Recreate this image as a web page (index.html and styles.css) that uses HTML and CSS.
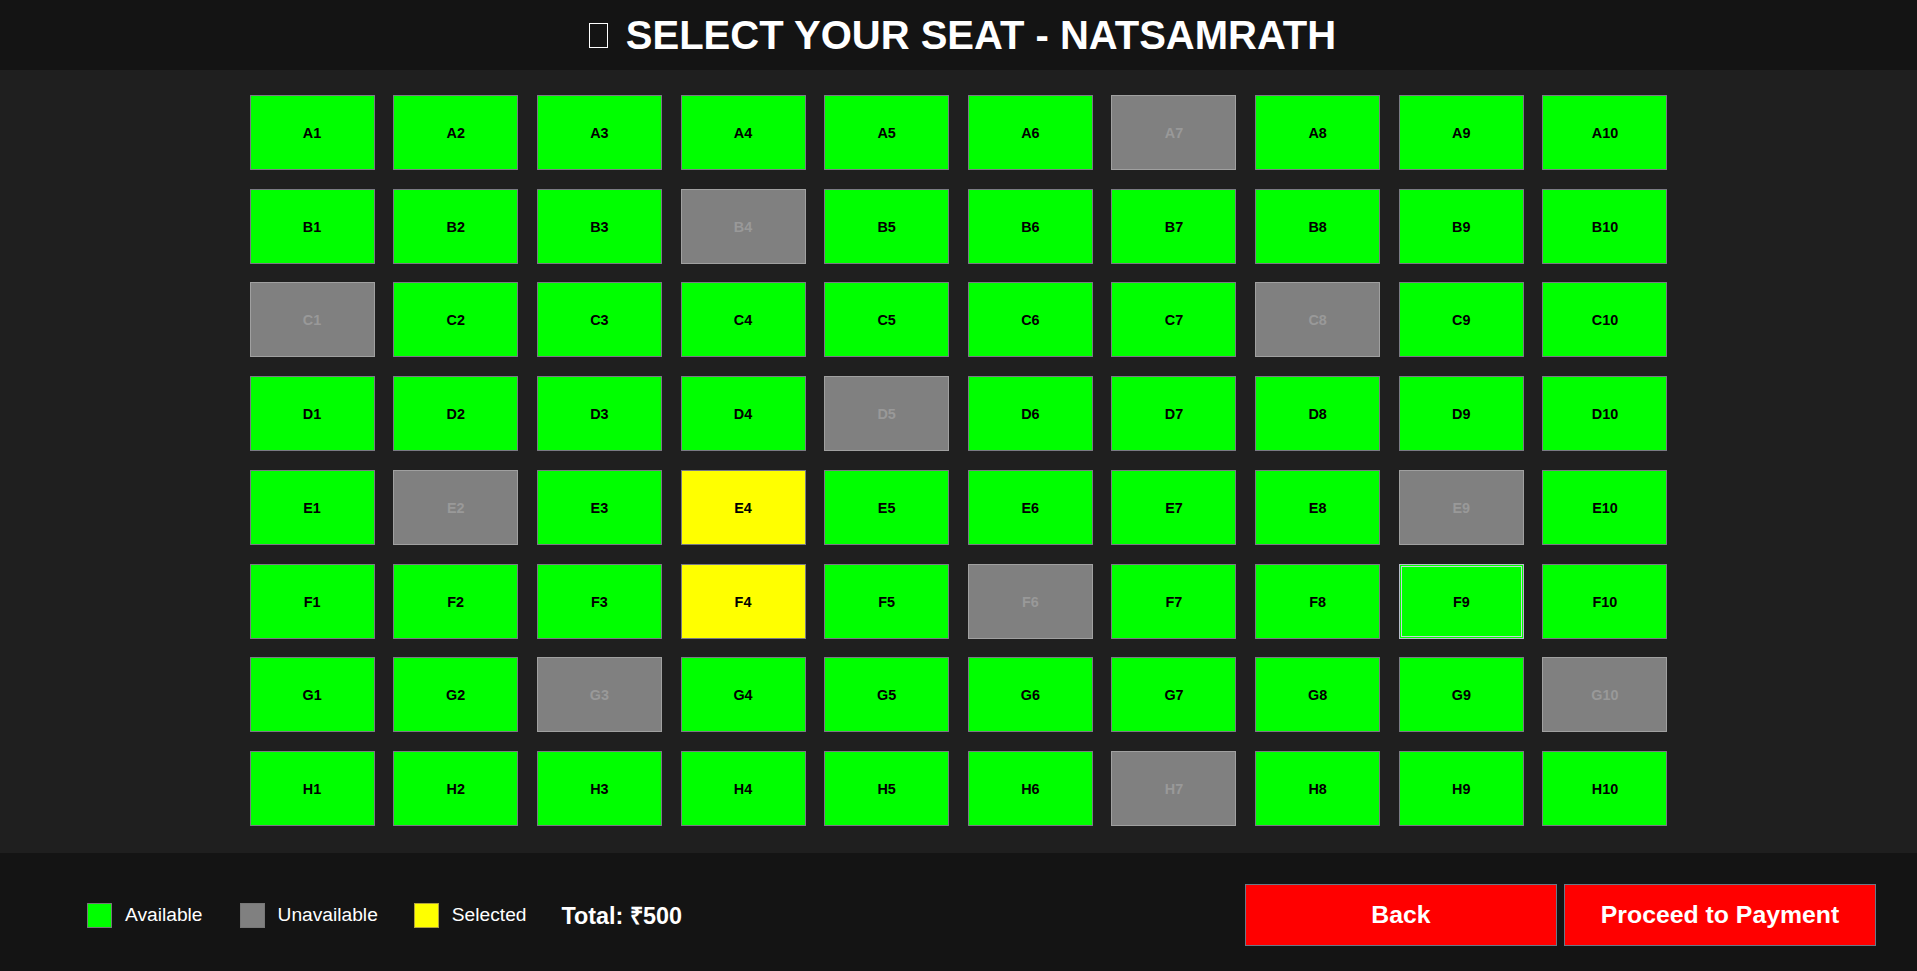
FILE: index.html
```html
<!DOCTYPE html>
<html lang="en">
<head>
<meta charset="utf-8">
<title>Select Your Seat - Natsamrath</title>
<link rel="stylesheet" href="styles.css">
</head>
<body>
<header class="topbar">
  <h1 class="title"><span class="tofu" aria-hidden="true"></span>SELECT YOUR SEAT - NATSAMRATH</h1>
</header>
<main class="hall">
  <div class="seat-grid">
    <button class="seat">A1</button><button class="seat">A2</button><button class="seat">A3</button><button class="seat">A4</button><button class="seat">A5</button><button class="seat">A6</button><button class="seat off">A7</button><button class="seat">A8</button><button class="seat">A9</button><button class="seat">A10</button>
    <button class="seat">B1</button><button class="seat">B2</button><button class="seat">B3</button><button class="seat off">B4</button><button class="seat">B5</button><button class="seat">B6</button><button class="seat">B7</button><button class="seat">B8</button><button class="seat">B9</button><button class="seat">B10</button>
    <button class="seat off">C1</button><button class="seat">C2</button><button class="seat">C3</button><button class="seat">C4</button><button class="seat">C5</button><button class="seat">C6</button><button class="seat">C7</button><button class="seat off">C8</button><button class="seat">C9</button><button class="seat">C10</button>
    <button class="seat">D1</button><button class="seat">D2</button><button class="seat">D3</button><button class="seat">D4</button><button class="seat off">D5</button><button class="seat">D6</button><button class="seat">D7</button><button class="seat">D8</button><button class="seat">D9</button><button class="seat">D10</button>
    <button class="seat">E1</button><button class="seat off">E2</button><button class="seat">E3</button><button class="seat picked">E4</button><button class="seat">E5</button><button class="seat">E6</button><button class="seat">E7</button><button class="seat">E8</button><button class="seat off">E9</button><button class="seat">E10</button>
    <button class="seat">F1</button><button class="seat">F2</button><button class="seat">F3</button><button class="seat picked">F4</button><button class="seat">F5</button><button class="seat off">F6</button><button class="seat">F7</button><button class="seat">F8</button><button class="seat focused">F9</button><button class="seat">F10</button>
    <button class="seat">G1</button><button class="seat">G2</button><button class="seat off">G3</button><button class="seat">G4</button><button class="seat">G5</button><button class="seat">G6</button><button class="seat">G7</button><button class="seat">G8</button><button class="seat">G9</button><button class="seat off">G10</button>
    <button class="seat">H1</button><button class="seat">H2</button><button class="seat">H3</button><button class="seat">H4</button><button class="seat">H5</button><button class="seat">H6</button><button class="seat off">H7</button><button class="seat">H8</button><button class="seat">H9</button><button class="seat">H10</button>
  </div>
</main>
<footer class="bottombar">
  <div class="legend">
    <div class="legend-item"><span class="swatch swatch-green"></span><span>Available</span></div>
    <div class="legend-item"><span class="swatch swatch-gray"></span><span>Unavailable</span></div>
    <div class="legend-item"><span class="swatch swatch-yellow"></span><span>Selected</span></div>
    <div class="total">Total: ₹500</div>
  </div>
  <div class="actions">
    <button class="action">Back</button>
    <button class="action">Proceed to Payment</button>
  </div>
</footer>
</body>
</html>
```

FILE: styles.css
```css
html, body {
  margin: 0;
  padding: 0;
}
body {
  background: #1f1f1f;
  color: #ffffff;
  font-family: "Liberation Sans", Arial, sans-serif;
  height: 971px;
  display: flex;
  flex-direction: column;
  overflow: hidden;
}
.topbar {
  height: 70px;
  background: #141414;
  display: flex;
  align-items: center;
  justify-content: center;
  flex: none;
}
.title {
  margin: 0;
  font-size: 40px;
  font-weight: bold;
  line-height: 1;
  display: flex;
  align-items: center;
  padding-bottom: 1px;
  padding-left: 8px;
}
.tofu {
  display: inline-block;
  width: 17px;
  height: 23px;
  border: 1.5px solid #ffffff;
  margin-right: 18px;
  margin-top: 2px;
}
.hall {
  flex: 1;
  background: #1f1f1f;
  display: flex;
  justify-content: center;
  padding-top: 25px;
}
.seat-grid {
  display: grid;
  grid-template-columns: repeat(10, 125px);
  grid-auto-rows: 75px;
  column-gap: 18.67px;
  row-gap: 18.71px;
  align-content: start;
}
.seat {
  margin: 0;
  padding: 1px 0 0 0;
  box-sizing: border-box;
  width: 125px;
  height: 75px;
  background: #00ff00;
  border: 1px solid #7a7a84;
  color: #000000;
  font-family: "Liberation Sans", Arial, sans-serif;
  font-weight: bold;
  font-size: 14.4px;
  cursor: pointer;
}
.seat.off {
  background: #808080;
  border-color: #a0a0a0;
  color: #999999;
}
.seat.picked {
  background: #ffff00;
}
.seat.focused {
  border: 1px solid #b8bccb;
  box-shadow: inset 0 0 0 1px #00ff00, inset 0 0 0 2px #c8d0dc;
}
.bottombar {
  height: 118px;
  flex: none;
  background: #141414;
  box-sizing: border-box;
  padding: 6px 41px 0 87px;
  display: flex;
  align-items: center;
  justify-content: space-between;
}
.legend {
  display: flex;
  align-items: center;
  font-size: 19.2px;
}
.legend-item {
  display: flex;
  align-items: center;
  gap: 13px;
  margin-right: 36px;
}
.legend-item:first-child {
  margin-right: 37px;
}
.swatch {
  display: inline-block;
  width: 25px;
  height: 25px;
  box-sizing: border-box;
  border: 1px solid #777777;
}
.swatch-green { background: #00ff00; }
.swatch-gray { background: #808080; }
.swatch-yellow { background: #ffff00; border-color: #b0a040; }
.total {
  font-weight: bold;
  font-size: 23.4px;
  margin-left: -1px;
}
.actions {
  display: flex;
  gap: 7px;
}
.action {
  margin: 0;
  box-sizing: border-box;
  width: 312px;
  height: 62px;
  background: #ff0000;
  border: 1px solid #6c7886;
  color: #ffffff;
  font-family: "Liberation Sans", Arial, sans-serif;
  font-weight: bold;
  font-size: 24.8px;
  cursor: pointer;
}
```
